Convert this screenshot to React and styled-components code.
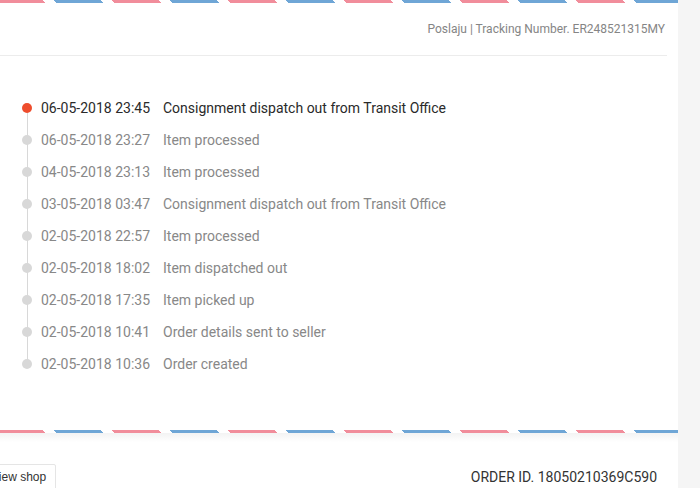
import React from "react";
import styled, { createGlobalStyle } from "styled-components";

const GlobalStyle = createGlobalStyle`
  html, body {
    margin: 0;
    padding: 0;
    background: #f5f5f5;
    overflow: hidden;
    font-family: Roboto, "Helvetica Neue", Arial, sans-serif;
  }
`;

const Page = styled.div`
  width: 698px;
  margin-left: -20px;
`;

const Card = styled.div`
  background: #fff;
`;

const Stripe = styled.div`
  height: 3px;
  background-size: 116px 3px;
  background-position-x: 77px;
  background-image: repeating-linear-gradient(
    45deg,
    #6fa6d6,
    #6fa6d6 33px,
    transparent 0,
    transparent 41px,
    #f18d9b 0,
    #f18d9b 74px,
    transparent 0,
    transparent 82px
  );
`;

const Header = styled.div`
  height: 52px;
  margin: 0 11px 0 20px;
  display: flex;
  align-items: center;
  justify-content: flex-end;
  padding-right: 2px;
  border-bottom: 1px solid #ececec;
  font-size: 12px;
  color: #858585;
`;

const Timeline = styled.ul`
  list-style: none;
  margin: 0;
  padding: 36px 0 50px 43px;
`;

const Row = styled.li`
  position: relative;
  display: flex;
  align-items: center;
  height: 32px;
  font-size: 14px;
  color: ${(p) => (p.$active ? "#2a2a2a" : "#888")};

  &::before {
    content: "";
    position: absolute;
    left: 4px;
    width: 1px;
    background: #d8d8d8;
    top: ${(p) => (p.$first ? "50%" : "0")};
    bottom: ${(p) => (p.$last ? "50%" : "0")};
  }
`;

const Dot = styled.span`
  position: relative;
  width: 10px;
  height: 10px;
  border-radius: 50%;
  flex: none;
  background: ${(p) => (p.$active ? "#ee4d2d" : "#d8d8d8")};
  margin-left: -1px;
  margin-right: 9px;
`;

const Time = styled.span`
  width: 122px;
  flex: none;
`;

const Desc = styled.span``;

const Shadow = styled.div`
  height: 9px;
  background: linear-gradient(#f3f3f3, #fff);
`;

const Footer = styled.div`
  display: flex;
  justify-content: space-between;
  align-items: flex-start;
  box-sizing: border-box;
  padding: 22px 21px 0 1px;
  height: 46px;
  overflow: hidden;
  background: #fff;
`;

const ShopButton = styled.button`
  height: 26px;
  padding: 0 9px;
  border: 1px solid #e5e5e5;
  border-radius: 2px;
  background: #fff;
  font-family: "Liberation Sans", Arial, sans-serif;
  font-size: 12px;
  color: #333;
`;

const OrderId = styled.div`
  line-height: 26px;
  font-size: 14px;
  color: #333;
`;

const events = [
  ["06-05-2018 23:45", "Consignment dispatch out from Transit Office"],
  ["06-05-2018 23:27", "Item processed"],
  ["04-05-2018 23:13", "Item processed"],
  ["03-05-2018 03:47", "Consignment dispatch out from Transit Office"],
  ["02-05-2018 22:57", "Item processed"],
  ["02-05-2018 18:02", "Item dispatched out"],
  ["02-05-2018 17:35", "Item picked up"],
  ["02-05-2018 10:41", "Order details sent to seller"],
  ["02-05-2018 10:36", "Order created"],
];

export default function App() {
  return (
    <Page>
      <GlobalStyle />
      <Card>
        <Stripe />
        <Header>Poslaju | Tracking Number. ER248521315MY</Header>
        <Timeline>
          {events.map(([time, desc], i) => (
            <Row
              key={i}
              $active={i === 0}
              $first={i === 0}
              $last={i === events.length - 1}
            >
              <Dot $active={i === 0} />
              <Time>{time}</Time>
              <Desc>{desc}</Desc>
            </Row>
          ))}
        </Timeline>
        <Stripe />
      </Card>
      <Shadow />
      <Footer>
        <ShopButton>View shop</ShopButton>
        <OrderId>ORDER ID. 18050210369C590</OrderId>
      </Footer>
    </Page>
  );
}
